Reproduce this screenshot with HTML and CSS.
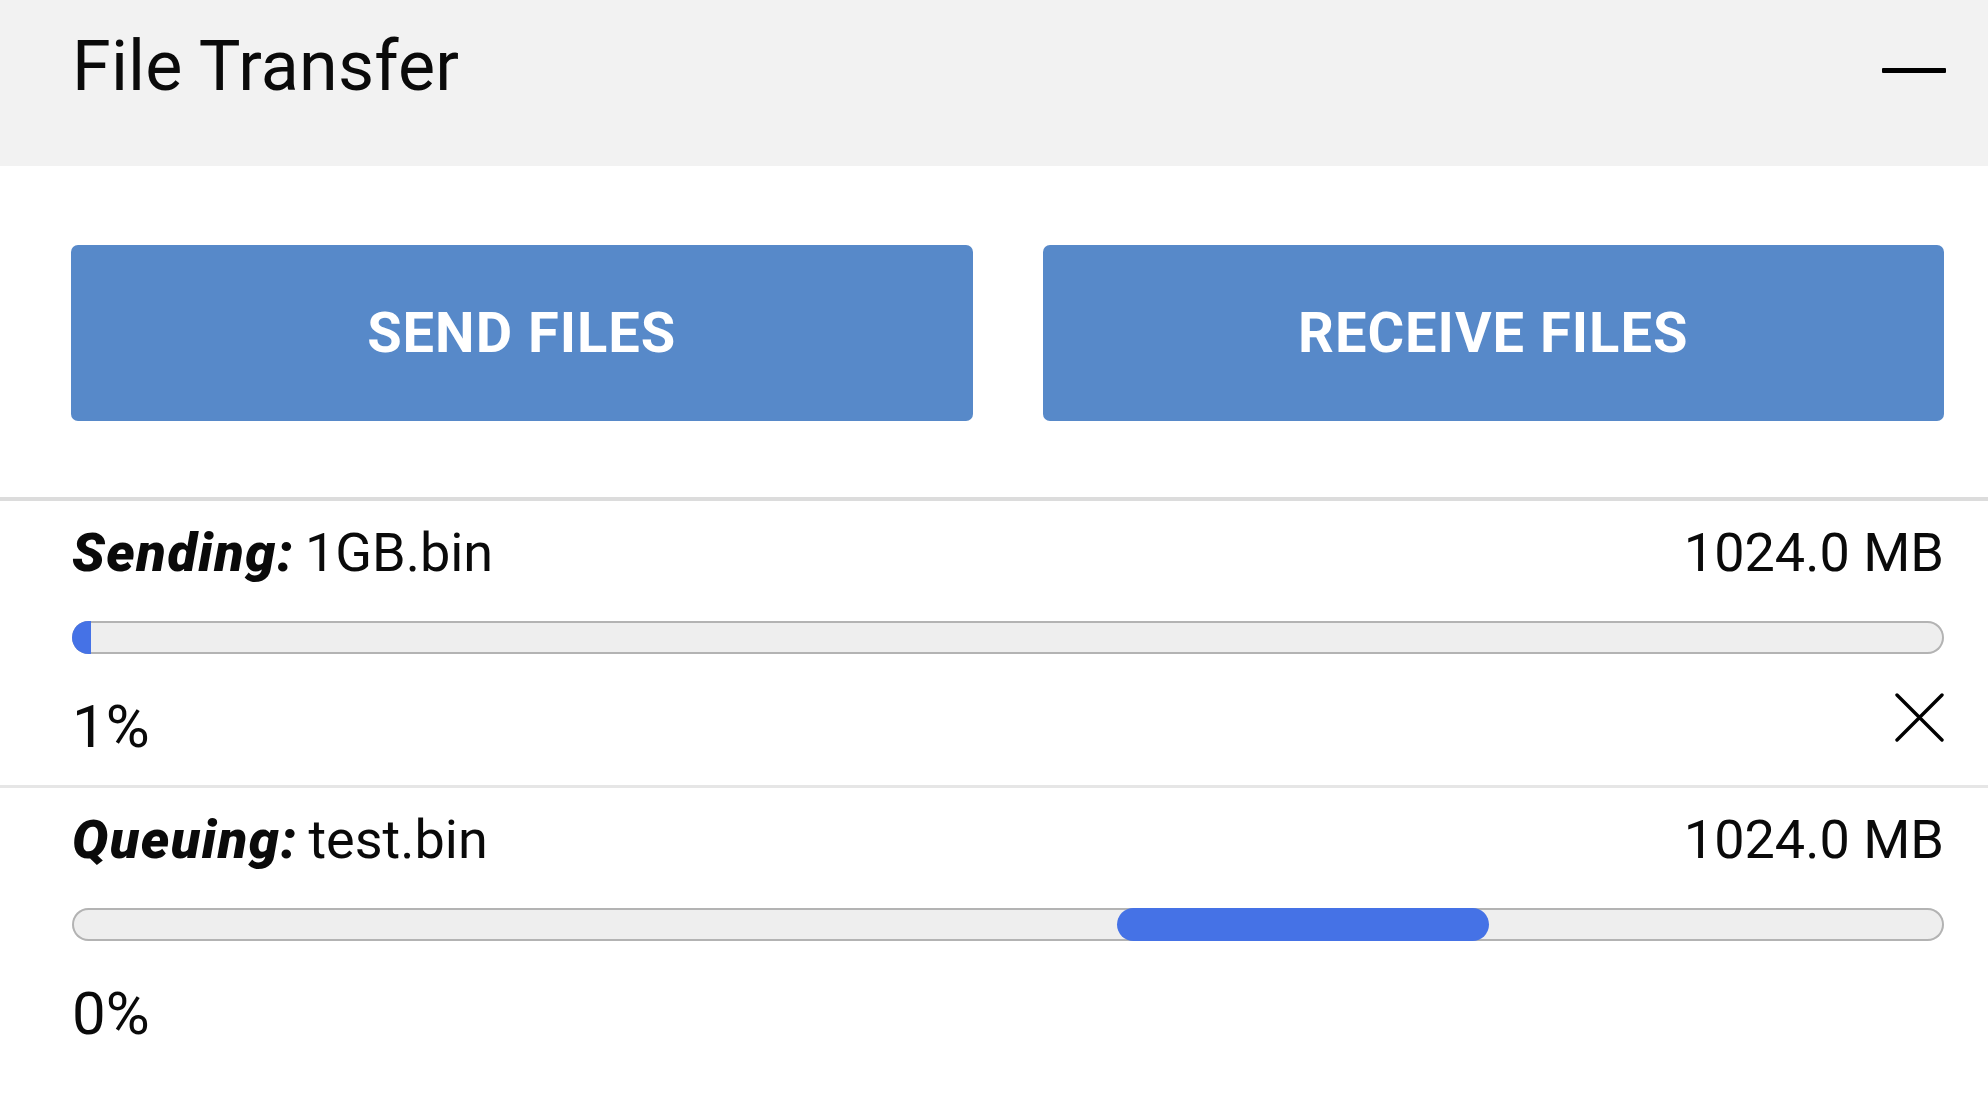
FILE: index.html
```html
<!DOCTYPE html>
<html lang="en">
<head>
<meta charset="utf-8">
<title>File Transfer</title>
<link rel="stylesheet" href="styles.css">
</head>
<body>
<div class="panel">
  <header class="header">
    <h1 class="title">File Transfer</h1>
    <button class="minimize" aria-label="Minimize"><span class="minus"></span></button>
  </header>

  <section class="actions">
    <button class="action">SEND FILES</button>
    <button class="action">RECEIVE FILES</button>
  </section>

  <section class="transfer">
    <div class="info">
      <div class="name"><span class="status">Sending:</span> 1GB.bin</div>
      <div class="size">1024.0 MB</div>
    </div>
    <div class="track"><div class="fill" style="width:1%"></div></div>
    <div class="footer">
      <div class="percent">1%</div>
      <button class="cancel" aria-label="Cancel">
        <svg width="49" height="49" viewBox="0 0 49 49"><path d="M2 2 L47 47 M47 2 L2 47" stroke="#000" stroke-width="3.4" stroke-linecap="round" fill="none"/></svg>
      </button>
    </div>
  </section>

  <section class="transfer">
    <div class="info">
      <div class="name"><span class="status">Queuing:</span> test.bin</div>
      <div class="size">1024.0 MB</div>
    </div>
    <div class="track"><div class="fill indeterminate"></div></div>
    <div class="footer">
      <div class="percent">0%</div>
    </div>
  </section>
</div>
</body>
</html>
```
FILE: styles.css
```css
* { box-sizing: border-box; }

html, body {
  margin: 0;
  padding: 0;
  background: #ffffff;
}

body {
  font-family: Roboto, "Liberation Sans", sans-serif;
  color: #0a0a0a;
}

.header {
  height: 166px;
  background: #f2f2f2;
  display: flex;
  justify-content: space-between;
  align-items: flex-start;
  padding: 31px 42px 0 72px;
}

.title {
  margin: 0;
  font-size: 70px;
  line-height: 70px;
  font-weight: 400;
  letter-spacing: 0.2px;
}

.minimize {
  margin-top: 37px;
  padding: 0;
  border: 0;
  background: none;
  display: flex;
}

.minus {
  display: block;
  width: 64px;
  height: 5px;
  background: #000;
  border-radius: 1px;
}

.actions {
  display: flex;
  gap: 70px;
  padding: 79px 44px 76px 71px;
  border-bottom: 4px solid #dcdcdc;
}

.action {
  flex: 1;
  height: 176px;
  border: 0;
  border-radius: 7px;
  background: #5789c9;
  color: #ffffff;
  font-family: Roboto, "Liberation Sans", sans-serif;
  font-size: 56px;
  font-weight: 700;
  letter-spacing: 1px;
  padding: 0;
}

.transfer {
  padding: 25px 44px 28px 72px;
  border-bottom: 3px solid #e6e6e6;
}

.transfer:last-child {
  border-bottom: 0;
}

.info {
  display: flex;
  justify-content: space-between;
  font-size: 54px;
  line-height: 54px;
}

.name {
  word-spacing: -3px;
}

.status {
  font-weight: 900;
  font-style: italic;
  letter-spacing: 1.5px;
}

.track {
  margin-top: 41px;
  height: 33px;
  border-radius: 17px;
  background: #eeeeee;
  box-shadow: inset 0 0 0 2px #b3b3b3;
  overflow: hidden;
  display: flex;
}

.fill {
  height: 100%;
  background: #4572e6;
}

.fill.indeterminate {
  margin-left: 55.8%;
  width: 19.9%;
  border-radius: 17px;
}

.footer {
  margin-top: 39px;
  display: flex;
  justify-content: space-between;
  align-items: flex-start;
}

.percent {
  padding-top: 4px;
  font-size: 60px;
  line-height: 60px;
}

.cancel {
  padding: 0;
  border: 0;
  background: none;
  display: flex;
}
```
